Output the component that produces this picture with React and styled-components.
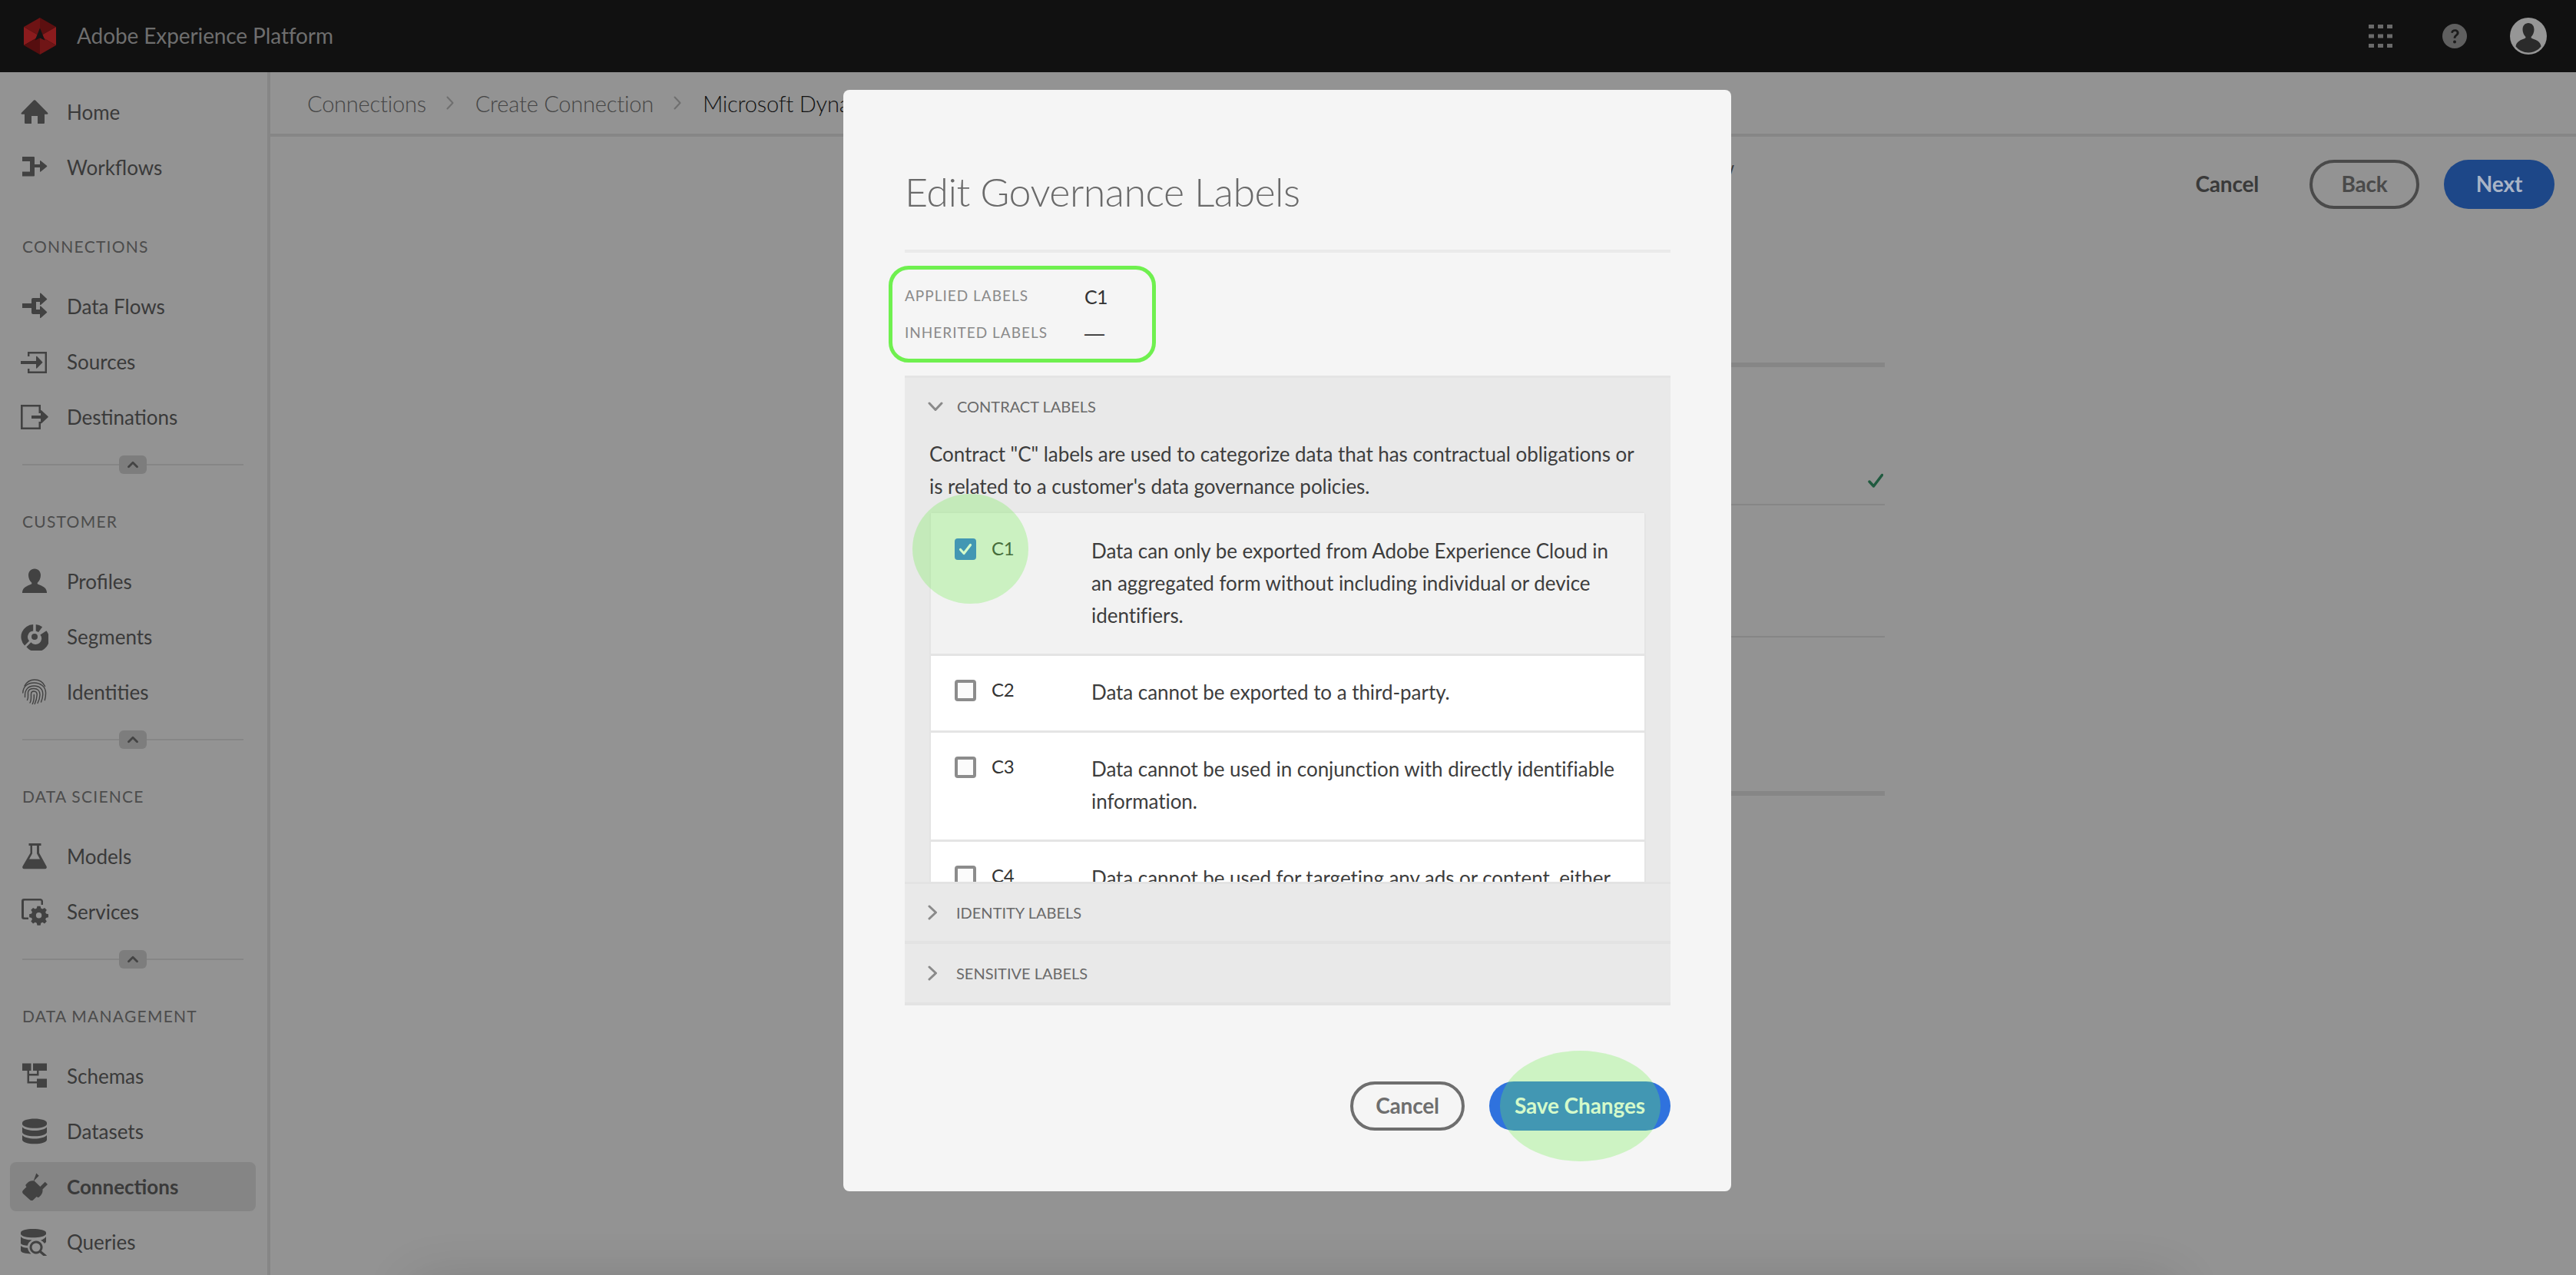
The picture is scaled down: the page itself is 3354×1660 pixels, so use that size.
import React from "react";
import styled, { createGlobalStyle } from "styled-components";

const Global = createGlobalStyle`
  html, body { margin: 0; padding: 0; background: #939393; }
  body { font-family: Lato, "Open Sans", "Liberation Sans", sans-serif; overflow: hidden; }
  * { box-sizing: border-box; }
`;

const Page = styled.div`
  position: relative;
  width: 3354px;
  height: 1660px;
  overflow: hidden;
  display: flex;
  flex-direction: column;
`;

const TopBar = styled.header`
  height: 94px;
  flex: none;
  background: #111;
  display: flex;
  align-items: center;
  padding: 0 38px 0 31px;
`;
const Brand = styled.div`
  font-size: 28px;
  color: #6e6e6e;
  margin-left: 27px;
  letter-spacing: -0.1px;
  padding-bottom: 2px;
`;
const TopIcons = styled.div`
  margin-left: auto;
  display: flex;
  align-items: center;
  gap: 56px;
`;
const Shell = styled.div`
  flex: 1;
  display: flex;
  min-height: 0;
`;
const Sidebar = styled.nav`
  width: 352px;
  flex: none;
  border-right: 4px solid #868686;
  padding: 20px 15px 0 13px;
  background: #939393;
`;
const NavList = styled.div`
  display: flex;
  flex-direction: column;
  gap: 8px;
`;
const NavItem = styled.div`
  height: 64px;
  display: flex;
  align-items: center;
  gap: 24px;
  padding-left: 14px;
  border-radius: 8px;
  font-size: 26px;
  color: #3a3a3a;
  font-weight: ${(p) => (p.$active ? 700 : 400)};
  background: ${(p) => (p.$active ? "#858585" : "transparent")};
`;
const Heading = styled.div`
  height: 28px;
  line-height: 28px;
  margin: ${(p) => (p.$first ? "57px" : "48px")} 0 32px 16px;
  font-size: 21px;
  letter-spacing: 1.25px;
  color: #4c4c4c;
  text-transform: uppercase;
`;
const Fold = styled.div`
  height: 24px;
  margin: 18px 0 0 16px;
  width: 288px;
  display: flex;
  align-items: center;
  justify-content: center;
  background: linear-gradient(#868686, #868686) center / 100% 2px no-repeat;
`;
const FoldButton = styled.div`
  width: 36px;
  height: 24px;
  border-radius: 6px;
  background: #7d7d7d;
  display: flex;
  align-items: center;
  justify-content: center;
`;
const Main = styled.main`
  flex: 1;
  min-width: 0;
`;
const Crumbs = styled.div`
  height: 84px;
  border-bottom: 4px solid #868686;
  display: flex;
  align-items: center;
  padding: 0 0 0 48px;
  margin-bottom: 30px;
  font-size: 29px;
  letter-spacing: -0.2px;
  font-weight: 300;
  color: #454545;
  white-space: nowrap;
`;
const CrumbSep = styled.svg`
  width: 10px;
  height: 18px;
  margin: 0 28px 0 26px;
`;
const CrumbNow = styled.span`
  color: #111;
`;
const Actions = styled.div`
  display: flex;
  align-items: flex-start;
  height: 64px;
  padding-right: 28px;
`;
const StepLabel = styled.span`
  margin-left: 1000px;
  width: 906px;
  text-align: right;
  font-size: 24px;
  line-height: 20px;
  color: #3a3a3a;
`;
const PlainAction = styled.span`
  margin-left: auto;
  align-self: center;
  font-size: 28px;
  font-weight: 700;
  color: #3a3a3a;
  letter-spacing: -0.2px;
  padding-bottom: 3px;
`;
const GhostButton = styled.div`
  height: 64px;
  width: ${(p) => p.$w}px;
  margin-left: ${(p) => p.$ml || 0}px;
  border: 4px solid ${(p) => p.$c};
  border-radius: 32px;
  color: ${(p) => p.$c};
  font-size: 28px;
  font-weight: 700;
  display: flex;
  align-items: center;
  justify-content: center;
  letter-spacing: -0.2px;
  padding-bottom: 3px;
`;
const FilledButton = styled.div`
  height: 64px;
  width: ${(p) => p.$w}px;
  margin-left: 32px;
  border-radius: 32px;
  background: ${(p) => p.$bg};
  color: ${(p) => p.$fg};
  font-size: 28px;
  font-weight: 700;
  display: flex;
  align-items: center;
  justify-content: center;
  letter-spacing: -0.1px;
  padding-bottom: 3px;
`;
const Behind = styled.div`
  width: 1254px;
  margin: 200px 0 0 848px;
`;
const BehindRule = styled.div`
  height: ${(p) => p.$h}px;
  background: #868686;
`;
const BehindRow = styled.div`
  height: ${(p) => p.$h}px;
  display: flex;
  justify-content: flex-end;
  align-items: flex-end;
  padding: 0 2px ${(p) => p.$pb || 0}px 0;
`;
const FoldShadow = styled.div`
  position: absolute;
  left: 540px;
  top: 1672px;
  width: 2290px;
  height: 100px;
  box-shadow: 0 0 70px rgba(0, 0, 0, 0.16);
`;

/* modal */
const Overlay = styled.div`
  position: absolute;
  inset: 0;
  display: flex;
  justify-content: center;
  align-items: flex-start;
  padding: 117px 2px 0 0;
`;
const Modal = styled.section`
  position: relative;
  width: 1156px;
  height: 1434px;
  background: #f5f5f5;
  border-radius: 8px;
  padding: 98px 79px 0 80px;
`;
const Title = styled.h2`
  margin: 0;
  height: 68px;
  line-height: 68px;
  font-size: 52px;
  letter-spacing: -0.55px;
  font-weight: 300;
  color: #6a6a6a;
`;
const Rule = styled.div`
  height: 4px;
  margin-top: 42px;
  background: #eaeaea;
`;
const LabelBox = styled.div`
  width: 348px;
  height: 126px;
  margin: 17px 0 17px -21px;
  border: 5px solid #6ff04f;
  border-radius: 26px;
  padding: 9px 0 0 16px;
  display: grid;
  grid-template-columns: 234px auto;
  grid-auto-rows: 48px;
  align-items: center;
  align-content: start;
`;
const MetaKey = styled.span`
  font-size: 19px;
  letter-spacing: 1px;
  color: #8a8a8a;
  text-transform: uppercase;
  white-space: nowrap;
`;
const MetaValue = styled.span`
  font-size: 25px;
  letter-spacing: -0.6px;
  color: #333;
  margin-top: 4px;
`;
const MetaDash = styled(MetaValue)`
  font-family: "Liberation Sans", sans-serif;
  font-size: 26px;
  letter-spacing: 0;
`;
const Accordion = styled.div`
  background: #e9e9e9;
  border-top: 3px solid #e4e4e4;
`;
const AccordionHead = styled.div`
  height: ${(p) => p.$h}px;
  display: flex;
  align-items: center;
  gap: ${(p) => p.$gap}px;
  padding-left: ${(p) => p.$pl}px;
  font-size: 20px;
  text-transform: uppercase;
  color: #6a6a6a;
  border-bottom: ${(p) => (p.$line ? "4px solid #e3e3e3" : "none")};
  border-top: ${(p) => (p.$top ? "3px solid #e3e3e3" : "none")};
`;
const AccordionBody = styled.div`
  height: 582px;
  overflow: hidden;
  padding: 0 32px 0 32px;
`;
const Blurb = styled.p`
  margin: 4px 0 12px;
  font-size: 26px;
  line-height: 42px;
  color: #3d3d3d;
  letter-spacing: -0.05px;
  height: 84px;
`;
const LabelTable = styled.div`
  background: #fff;
  border: 2px solid #e4e4e4;
  border-radius: 6px 6px 0 0;
`;
const Row = styled.div`
  display: grid;
  grid-template-columns: 31px 50px 1fr;
  height: ${(p) => p.$h}px;
  padding: ${(p) => p.$pt}px 30px 0 31px;
  background: ${(p) => (p.$sel ? "#f2f2f2" : "#fff")};
  border-bottom: 3px solid #e4e4e4;
  align-items: start;
`;
const Box = styled.div`
  width: 28px;
  height: 28px;
  border-radius: 4px;
  border: ${(p) => (p.$on ? "none" : "4px solid #8c8c8c")};
  background: ${(p) => (p.$on ? "#2f72de" : "#fbfbfb")};
  display: flex;
  align-items: center;
  justify-content: center;
`;
const RowCode = styled.div`
  font-size: 24px;
  line-height: 26px;
  letter-spacing: -0.3px;
  margin-left: 17px;
  color: #333;
  width: 96px;
`;
const RowText = styled.div`
  font-size: 26px;
  line-height: 42px;
  margin: -5px 0 0 97px;
  color: #3d3d3d;
  width: 700px;
  letter-spacing: -0.05px;
`;
const Footer = styled.div`
  display: flex;
  justify-content: flex-end;
  margin-top: 99px;
`;
const Spot = styled.div`
  position: absolute;
  left: ${(p) => p.$x}px;
  top: ${(p) => p.$y}px;
  width: ${(p) => p.$w}px;
  height: ${(p) => p.$h}px;
  border-radius: 50%;
  background: rgba(111, 240, 80, 0.3);
  pointer-events: none;
`;
const GridGlyph = styled.svg`
  margin-right: 9px;
`;

const C = "#424242";
const Ico = ({ children, fill = C }) => (
  <svg width="36" height="36" viewBox="0 0 36 36" fill={fill} style={{ flex: "none" }}>{children}</svg>
);
const Home = () => (
  <Ico><path d="M18 2.2a1.3 1.3 0 0 1 1 .4L35 18.8c.8.8.6 2-.6 2H31v11.1a1.1 1.1 0 0 1-1.1 1.1H22V23h-8v10H6.1A1.1 1.1 0 0 1 5 31.9V20.8H1.6c-1.2 0-1.4-1.2-.6-2L17 2.6a1.3 1.3 0 0 1 1-.4Z" /></Ico>
);
const Workflows = () => (
  <Ico><path d="M2 4h15a1 1 0 0 1 1 1v9h7V9.6c0-.5.6-.8 1-.4l8 6.6c.4.4.4.9 0 1.2l-8 6.6c-.4.3-1 .1-1-.4V18h-7v10.5a1 1 0 0 1-1 1H2v-6h10V10H2Z" /></Ico>
);
const DataFlows = () => (
  <Ico><path d="M25 1c0-.5.6-.7 1-.4l8 7.3c.3.3.3.8 0 1l-8 7.1c-.4.3-1 .1-1-.4V12h-5v10h5v-4c0-.5.6-.7 1-.4l8 7.3c.3.3.3.8 0 1l-8 7.1c-.4.3-1 .1-1-.4V28h-9a2 2 0 0 1-2-2v-6H2v-6h12V9a2 2 0 0 1 2-2h9Z" /></Ico>
);
const Sources = () => (
  <Ico><path d="M9 5h25v28H9v-6h2.4v3.6h20.2V7.4H11.4V11H9Z" /><path d="M20 11.2c0-.5.6-.7 1-.4l7.2 7.4c.3.3.3.7 0 1L21 26.6c-.4.3-1 .1-1-.4V21H0v-4h20Z" /></Ico>
);
const Destinations = () => (
  <Ico><path d="M0 2h26v11h-2.5V4.5H2.6v27h20.900V24H26v10H0Z" /><path d="M26 9.600c0-.5.6-.7 1-.4l8.600 8c.3.3.3.7 0 1l-8.600 8c-.4.3-1 .1-1-.4V20H14v-4h12Z" /></Ico>
);
const Profile = () => (
  <Ico><path d="M18 1.500c5 0 8 3.600 8 8.600 0 3.400-1.600 7.200-3.900 9.200-.8.800-.6 2 .5 2.500C28 24 33.400 25.700 34 32v1H2v-1c.7-6.300 6-8 11.400-10.200 1.100-.5 1.300-1.700.5-2.500C11.600 17.300 10 13.500 10 10.100c0-5 3-8.600 8-8.600Z" /></Ico>
);
const Segments = () => (
  <Ico><path d="M16.200 2.100v8.500A7.700 7.700 0 0 0 11 23.400l-5.900 6A16 16 0 0 1 16.200 2.100Z" /><path d="M19.700 2.100a16 16 0 0 1 8.400 3.200l-5 6.800-3.400-1.500Z" /><path d="M25.400 15.400l8-5.200a16 16 0 0 1-26 21l6-6a7.700 7.700 0 0 0 12-9.800Z" /><circle cx="18" cy="18" r="4" /></Ico>
);
const Identity = () => (
  <Ico fill="none">
    <g stroke={C} strokeWidth="1.400" strokeLinecap="round">
      <path d="M5 10C8 4.500 12.500 2 18 2c6 0 11 3 13.500 8.500" />
      <path d="M2.800 19C3 10.500 9.500 6 17.500 6S32.500 11 32.600 19c0 3.500-.4 6.500-1.300 9.500" />
      <path d="M5.500 24.500C5 15.500 9 10 17.500 10 24.500 10 29 14.500 28.800 21c-.1 3.500-.8 6.500-2.300 10" />
      <path d="M8.500 28.500c1.800-3 .8-6.500 1-10 .3-3.500 3.500-5 7.500-5 5 0 8.200 3 8 8-.1 3.500-1 7.500-3 11" />
      <path d="M12 32c2.200-3.500 1.300-8 1.500-11.500.1-2 1.500-3.500 3.500-3.500 3 0 4.300 2 4.200 4.500-.2 3.500-1 7.500-3 12" />
      <path d="M17.300 21.500c.2 4.500-.3 8.500-2 12" />
    </g>
  </Ico>
);
const Models = () => (
  <Ico><path d="M10.500 1h16v3h-2.500v9.500L33.600 31c.8 1.600-.3 3.200-2 3.200H4.400c-1.700 0-2.800-1.600-2-3.200L12.500 13.500V4h-2Z M15 4v10.200L11 21.500h14L21 14.200V4Z" fillRule="evenodd" /></Ico>
);
const Services = () => (
  <Ico>
    <path d="M4 1h22a3.500 3.500 0 0 1 3 3v5h-2.500V4.500a1 1 0 0 0-1-1H5a1 1 0 0 0-1 1v20a1 1 0 0 0 1 1h5V28H4a3 3 0 0 1-3-3V4a3 3 0 0 1 3-3Z" />
    <path fillRule="evenodd" d="M21 10.500h4.500l.7 3.200 2.200 1 2.900-1.700 3 3-1.800 2.900.9 2.100 3.200.8v4.400l-3.200.8-.9 2.100 1.800 2.900-3 3-2.900-1.700-2.200 1-.7 3.100H21l-.7-3.100-2.200-1-2.900 1.700-3-3 1.800-2.900-.9-2.100-3.200-.8v-4.400l3.200-.8.900-2.100-1.800-2.900 3-3 2.900 1.700 2.200-1ZM23.200 19.500a4 4 0 1 0 .1 8 4 4 0 0 0-.1-8Z" transform="translate(1 -1) scale(.93) translate(1 2)" />
  </Ico>
);
const Schemas = () => (
  <Ico><path d="M2 1.500h11.500V11h-2.500v4h10v-4h-5V1.500H34V11H23.500v6.500H11v7.500h10v-3.500h13V33H21v-5.500H8.500V11H2Z" /></Ico>
);
const Datasets = () => (
  <Ico>
    <path d="M18 1.500c8.800 0 16 2.300 16 5.300v1.700c0 3-7.200 5.300-16 5.300S2 11.500 2 8.500V6.800c0-3 7.200-5.300 16-5.300Z" />
    <path d="M2 12.400c2.700 2.900 9 4.500 16 4.500s13.300-1.600 16-4.500v6.600c0 3-7.200 5.300-16 5.300S2 22 2 19Z" />
    <path d="M2 22.900c2.700 2.900 9 4.500 16 4.500s13.300-1.600 16-4.500v6c0 3-7.200 5.300-16 5.300S2 31.900 2 28.900Z" />
  </Ico>
);
const Plug = () => (
  <Ico><path d="M19.800 1.600l3.400 3.200-6.300 6.400 8 7.900 6.300-6.300 3.300 3.300-6.600 6.500c.5 3-.5 5.800-2.500 7.800l-2 2c-.7.700-1.800.8-2.600.1l-.6-.6-4.700 4.500c-1.100.9-2.800.9-3.900-.2L2.400 27.900c-1.100-1.200-1.100-3 .1-4.100L7 19.300l-.6-.7c-.7-.8-.7-2 0-2.700l2-2c2-2 4.800-3 7.800-2.500Z" transform="translate(.5 -1)" /></Ico>
);
const Queries = () => (
  <Ico>
    <path d="M16 1c8.400 0 17 1.700 17 5v2c-2.500 3-9 4.200-17 4.200S2 11 0 8V6c0-3.300 7.600-5 16-5Z" />
    <path d="M0 11c2 3 9 4.400 14.500 4.400-3 1.800-5 4-5.600 7.400C5 22.600 1.500 21.700 0 20Z" />
    <path d="M33 11v7l-2 2a12 12 0 0 0-5-4.300C29 15 31.700 13 33 11Z" />
    <path d="M0 23c1.500 1.600 5 2.600 9 2.800.5 3 2 5.800 4.500 7.600-7 0-13.500-1.500-13.500-4.400Z" />
    <path fillRule="evenodd" d="M20 16.500a8.500 8.500 0 0 1 7 13.300l6.900 5.700-2.200 2.500-7-5.900A8.500 8.500 0 1 1 20 16.500Zm0 3a5.500 5.500 0 1 0 0 11 5.500 5.500 0 0 0 0-11Z" />
  </Ico>
);

const Chev = ({ c = "#444" }) => (
  <svg width="14" height="10" viewBox="0 0 14 10" fill="none"><path d="M1.500 7.800 7 2.300l5.500 5.500" stroke={c} strokeWidth="2.800" strokeLinecap="round" strokeLinejoin="round" /></svg>
);
const ChevronRight = () => (
  <svg width="13" height="20" viewBox="0 0 13 20" fill="none" style={{ flex: "none" }}><path d="M2 2l8.500 8L2 18" stroke="#8a8a8a" strokeWidth="3" strokeLinecap="round" strokeLinejoin="round" /></svg>
);
const ChevronDown = () => (
  <svg width="20" height="13" viewBox="0 0 20 13" fill="none" style={{ flex: "none" }}><path d="M2 2l8 8.500L18 2" stroke="#8a8a8a" strokeWidth="3" strokeLinecap="round" strokeLinejoin="round" /></svg>
);

const Logo = () => (
  <svg width="42" height="48" viewBox="0 0 42 48">
    <path d="M21 0 42 12 21 24Z" fill="#5c0f10" />
    <path d="M21 0 0 12 21 24Z" fill="#6e1314" />
    <path d="M0 12 21 24 0 36Z" fill="#8b1b1d" />
    <path d="M42 12 21 24 42 36Z" fill="#8b1b1d" />
    <path d="M0 36 21 48V24Z" fill="#560e0f" />
    <path d="M42 36 21 48V24Z" fill="#701516" />
    <path d="M21 13.500 27.500 29.500 21 26.500 14.500 29.500Z" fill="#141414" />
  </svg>
);
const GridIcon = () => (
  <GridGlyph width="31" height="30" viewBox="0 0 31 30" fill="#6a6a6a">
    {[0, 12.500, 25].flatMap((y) => [0, 12, 24].map((x) => <rect key={`${x}-${y}`} x={x} y={y} width="7" height="5" />))}
  </GridGlyph>
);
const HelpIcon = () => (
  <svg width="32" height="32" viewBox="0 0 32 32">
    <circle cx="16" cy="16" r="16" fill="#5f5f5f" />
    <path d="M11 11.500c.6-2.800 2.700-4.300 5.400-4.300 3 0 5.200 1.800 5.200 4.500 0 3.700-4.100 3.900-4.100 7h-2.900c0-4.400 4-4.600 4-7 0-1.100-.9-1.900-2.200-1.900-1.200 0-2.200.7-2.600 2.200Z" fill="#1c1c1c" />
    <circle cx="16" cy="23.500" r="2" fill="#1c1c1c" />
  </svg>
);
const AvatarIcon = () => (
  <svg width="48" height="48" viewBox="0 0 48 48">
    <circle cx="24" cy="24" r="24" fill="#969696" />
    <path d="M24 7c4.500 0 7.500 3.500 7.500 8.500 0 3.500-1.500 7-3.500 9-.8.800-.6 2 .5 2.500 5 2 11 3.500 12 10.500A21.500 21.500 0 0 1 24 45.500 21.500 21.500 0 0 1 7.500 37.500c1-7 7-8.500 12-10.500 1.100-.5 1.300-1.700.5-2.500-2-2-3.500-5.500-3.500-9C16.500 10.500 19.500 7 24 7Z" fill="#2b2b2b" />
  </svg>
);
const SepIcon = () => (
  <CrumbSep viewBox="0 0 10 18" fill="none"><path d="M1.500 1.500 8.500 9l-7 7.500" stroke="#6f6f6f" strokeWidth="2" strokeLinecap="round" strokeLinejoin="round" /></CrumbSep>
);
const Tick = () => (
  <svg width="20" height="19" viewBox="0 0 20 19" fill="none"><path d="M2 11l5.500 6L18.500 2.500" stroke="#205a3f" strokeWidth="3.500" strokeLinecap="round" strokeLinejoin="round" /></svg>
);

const groups = [
  { items: [["Home", Home], ["Workflows", Workflows]] },
  { title: "Connections", first: true, fold: true, items: [["Data Flows", DataFlows], ["Sources", Sources], ["Destinations", Destinations]] },
  { title: "Customer", fold: true, items: [["Profiles", Profile], ["Segments", Segments], ["Identities", Identity]] },
  { title: "Data Science", fold: true, items: [["Models", Models], ["Services", Services]] },
  { title: "Data Management", items: [["Schemas", Schemas], ["Datasets", Datasets], ["Connections", Plug, true], ["Queries", Queries]] },
];

const rows = [
  { code: "C1", on: true, h: 186, pt: 33, text: "Data can only be exported from Adobe Experience Cloud in an aggregated form without including individual or device identifiers." },
  { code: "C2", h: 100, pt: 31, text: "Data cannot be exported to a third-party." },
  { code: "C3", h: 142, pt: 31, text: "Data cannot be used in conjunction with directly identifiable information." },
  { code: "C4", h: 142, pt: 31, text: "Data cannot be used for targeting any ads or content, either on-site or off-site." },
];

export default function App() {
  return (
    <Page>
      <Global />
      <TopBar>
        <Logo />
        <Brand>Adobe Experience Platform</Brand>
        <TopIcons>
          <GridIcon />
          <HelpIcon />
          <AvatarIcon />
        </TopIcons>
      </TopBar>
      <Shell>
        <Sidebar>
          {groups.map((g) => (
            <React.Fragment key={g.title || "top"}>
              {g.title && <Heading $first={g.first}>{g.title}</Heading>}
              <NavList>
                {g.items.map(([label, Icon, active]) => (
                  <NavItem key={label} $active={active}>
                    <Icon />
                    {label}
                  </NavItem>
                ))}
              </NavList>
              {g.fold && (
                <Fold>
                  <FoldButton><Chev /></FoldButton>
                </Fold>
              )}
            </React.Fragment>
          ))}
        </Sidebar>
        <Main>
          <Crumbs>
            Connections
            <SepIcon />
            Create Connection
            <SepIcon />
            <CrumbNow>Microsoft Dynamics</CrumbNow>
          </Crumbs>
          <Actions>
            <StepLabel>Review</StepLabel>
            <PlainAction>Cancel</PlainAction>
            <GhostButton $w={143} $c="#4a4a4a" $ml={66}>Back</GhostButton>
            <FilledButton $w={144} $bg="#1d4788" $fg="#a9b4c6">Next</FilledButton>
          </Actions>
          <Behind>
            <BehindRule $h={6} />
            <BehindRow $h={178} $pb={21}><Tick /></BehindRow>
            <BehindRule $h={2} />
            <BehindRow $h={170} />
            <BehindRule $h={2} />
            <BehindRow $h={200} />
            <BehindRule $h={6} />
          </Behind>
        </Main>
      </Shell>
      <FoldShadow />
      <Overlay>
        <Modal>
          <Title>Edit Governance Labels</Title>
          <Rule />
          <LabelBox>
            <MetaKey>Applied Labels</MetaKey>
            <MetaValue>C1</MetaValue>
            <MetaKey>Inherited Labels</MetaKey>
            <MetaDash>—</MetaDash>
          </LabelBox>
          <Accordion>
            <AccordionHead $h={74} $pl={30} $gap={18}><ChevronDown />Contract Labels</AccordionHead>
            <AccordionBody>
              <Blurb>Contract "C" labels are used to categorize data that has contractual obligations or is related to a customer's data governance policies.</Blurb>
              <LabelTable>
                {rows.map((r) => (
                  <Row key={r.code} $h={r.h} $pt={r.pt} $sel={r.on}>
                    <Box $on={r.on}>
                      {r.on && (
                        <svg width="18" height="16" viewBox="0 0 18 16" fill="none"><path d="M2.500 8.500l4.500 5L15.500 2.500" stroke="#fff" strokeWidth="3.200" strokeLinecap="round" strokeLinejoin="round" /></svg>
                      )}
                    </Box>
                    <RowCode>{r.code}</RowCode>
                    <RowText>{r.text}</RowText>
                  </Row>
                ))}
              </LabelTable>
            </AccordionBody>
            <AccordionHead $h={81} $pl={30} $gap={24} $top $line><ChevronRight />Identity Labels</AccordionHead>
            <AccordionHead $h={80} $pl={30} $gap={24} $line><ChevronRight />Sensitive Labels</AccordionHead>
          </Accordion>
          <Footer>
            <GhostButton $w={149} $c="#6e6e6e">Cancel</GhostButton>
            <FilledButton $w={236} $bg="#2f72de" $fg="#fff">Save Changes</FilledButton>
          </Footer>
          <Spot $x={90} $y={526} $w={151} $h={143} />
          <Spot $x={855} $y={1251} $w={209} $h={144} />
        </Modal>
      </Overlay>
    </Page>
  );
}
